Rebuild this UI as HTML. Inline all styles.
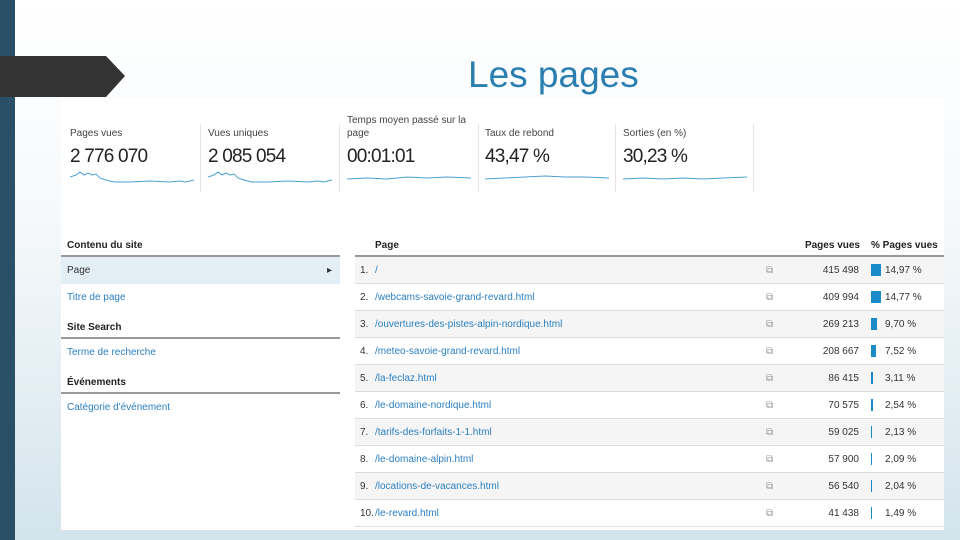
<!DOCTYPE html>
<html><head><meta charset="utf-8"><style>
body{margin:0;width:960px;height:540px;overflow:hidden;position:relative;font-family:"Liberation Sans",sans-serif;background:linear-gradient(180deg,#fff 0%,#f6f9fb 40%,#d3e4ec 100%)}
.band{position:absolute;left:0;top:0;width:15px;height:540px;background:#2a5068}
.arrow{position:absolute;left:0;top:56px;width:125px;height:41px;background:#333;clip-path:polygon(0 0,106px 0,125px 20px,106px 41px,0 41px)}
h1{position:absolute;left:468px;top:54px;margin:0;font-size:37px;font-weight:normal;color:#2a7fb0}
.shot{position:absolute;left:61px;top:98px;width:883px;height:432px;background:#fff;font-size:11px;color:#333}
.m{position:absolute;top:0;width:128px;height:100px}
.m .l{position:absolute;left:0;bottom:58px;font-size:10px;color:#444;line-height:13px}
.m .v{position:absolute;left:0;top:48px;font-size:19px;color:#222;letter-spacing:-0.8px}
.m svg{position:absolute;left:0;top:71px}
.sep{position:absolute;top:26px;width:1px;height:68px;background:#e5e5e5}
.lp{position:absolute;left:0;top:139px;width:279px;font-size:10px}
.hd{font-weight:bold;color:#222;border-bottom:2px solid #999;height:18px;line-height:18px;padding-left:6px}
.it{height:27px;line-height:27px;padding-left:6px;color:#2b7fc0}
.tb{position:absolute;left:294px;top:139px;width:589px;font-size:10px}
.r{height:26px;line-height:26px;border-bottom:1px solid #ddd;position:relative}
.r:nth-child(odd){background:#f5f5f5}
.r span{position:absolute;top:1px}
.n{left:5px;color:#333}.p{left:20px;color:#2b7fc0}.ic{left:411px;color:#999}
.v1{right:85px;color:#333}.r .bar{left:516px;top:7px;height:12px;background:#1a8bc8}.pc{left:530px;color:#333}
</style></head><body>
<div class="band"></div><div class="arrow"></div>
<h1>Les pages</h1>
<div class="shot">
<div class="m" style="left:9px"><div class="l">Pages vues</div><div class="v">2 776 070</div><svg width="124" height="16"><path d="M0 8 L6 6 L10 3 L14 6 L18 4 L22 6 L26 5 L30 9 L36 11 L44 13 L60 13 L80 12 L100 13 L110 12 L116 13 L124 11" fill="none" stroke="#4a9fd0"/></svg></div>
<div class="sep" style="left:139px"></div>
<div class="m" style="left:147px"><div class="l">Vues uniques</div><div class="v">2 085 054</div><svg width="124" height="16"><path d="M0 8 L6 6 L10 3 L14 6 L18 4 L22 6 L26 5 L30 9 L36 11 L44 13 L60 13 L80 12 L100 13 L110 12 L116 13 L124 11" fill="none" stroke="#4a9fd0"/></svg></div>
<div class="sep" style="left:278px"></div>
<div class="m" style="left:286px"><div class="l">Temps moyen passé sur la<br>page</div><div class="v">00:01:01</div><svg width="124" height="16"><path d="M0 10 L20 9 L40 10 L60 8 L80 9 L100 8 L124 9" fill="none" stroke="#4a9fd0"/></svg></div>
<div class="sep" style="left:417px"></div>
<div class="m" style="left:424px"><div class="l">Taux de rebond</div><div class="v">43,47 %</div><svg width="124" height="16"><path d="M0 10 L20 9 L40 8 L60 7 L80 8 L100 8 L124 9" fill="none" stroke="#4a9fd0"/></svg></div>
<div class="sep" style="left:554px"></div>
<div class="m" style="left:562px"><div class="l">Sorties (en %)</div><div class="v">30,23 %</div><svg width="124" height="16"><path d="M0 10 L20 9 L40 10 L60 9 L80 10 L100 9 L124 8" fill="none" stroke="#4a9fd0"/></svg></div>
<div class="sep" style="left:692px"></div>
<div class="lp">
<div class="hd">Contenu du site</div>
<div class="it" style="background:#e3eef5;color:#333">Page<span style="float:right;margin-right:8px">▸</span></div>
<div class="it">Titre de page</div>
<div class="hd" style="margin-top:8px">Site Search</div>
<div class="it">Terme de recherche</div>
<div class="hd" style="margin-top:8px">Événements</div>
<div class="it">Catégorie d'événement</div>
</div>
<div class="tb">
<div style="height:18px;border-bottom:2px solid #999;position:relative;font-weight:bold;color:#222"><span style="position:absolute;left:20px;top:3px">Page</span><span style="position:absolute;right:84px;top:3px">Pages vues</span><span style="position:absolute;left:516px;top:3px">% Pages vues</span></div>
<div>
<div class="r"><span class="n">1.</span><span class="p">/</span><span class="ic">⧉</span><span class="v1">415 498</span><span class="bar" style="width:10px"></span><span class="pc">14,97 %</span></div>
<div class="r"><span class="n">2.</span><span class="p">/webcams-savoie-grand-revard.html</span><span class="ic">⧉</span><span class="v1">409 994</span><span class="bar" style="width:10px"></span><span class="pc">14,77 %</span></div>
<div class="r"><span class="n">3.</span><span class="p">/ouvertures-des-pistes-alpin-nordique.html</span><span class="ic">⧉</span><span class="v1">269 213</span><span class="bar" style="width:6px"></span><span class="pc">9,70 %</span></div>
<div class="r"><span class="n">4.</span><span class="p">/meteo-savoie-grand-revard.html</span><span class="ic">⧉</span><span class="v1">208 667</span><span class="bar" style="width:5px"></span><span class="pc">7,52 %</span></div>
<div class="r"><span class="n">5.</span><span class="p">/la-feclaz.html</span><span class="ic">⧉</span><span class="v1">86 415</span><span class="bar" style="width:2px"></span><span class="pc">3,11 %</span></div>
<div class="r"><span class="n">6.</span><span class="p">/le-domaine-nordique.html</span><span class="ic">⧉</span><span class="v1">70 575</span><span class="bar" style="width:2px"></span><span class="pc">2,54 %</span></div>
<div class="r"><span class="n">7.</span><span class="p">/tarifs-des-forfaits-1-1.html</span><span class="ic">⧉</span><span class="v1">59 025</span><span class="bar" style="width:1px"></span><span class="pc">2,13 %</span></div>
<div class="r"><span class="n">8.</span><span class="p">/le-domaine-alpin.html</span><span class="ic">⧉</span><span class="v1">57 900</span><span class="bar" style="width:1px"></span><span class="pc">2,09 %</span></div>
<div class="r"><span class="n">9.</span><span class="p">/locations-de-vacances.html</span><span class="ic">⧉</span><span class="v1">56 540</span><span class="bar" style="width:1px"></span><span class="pc">2,04 %</span></div>
<div class="r"><span class="n">10.</span><span class="p">/le-revard.html</span><span class="ic">⧉</span><span class="v1">41 438</span><span class="bar" style="width:1px"></span><span class="pc">1,49 %</span></div>
</div></div>
</div>
</body></html>
